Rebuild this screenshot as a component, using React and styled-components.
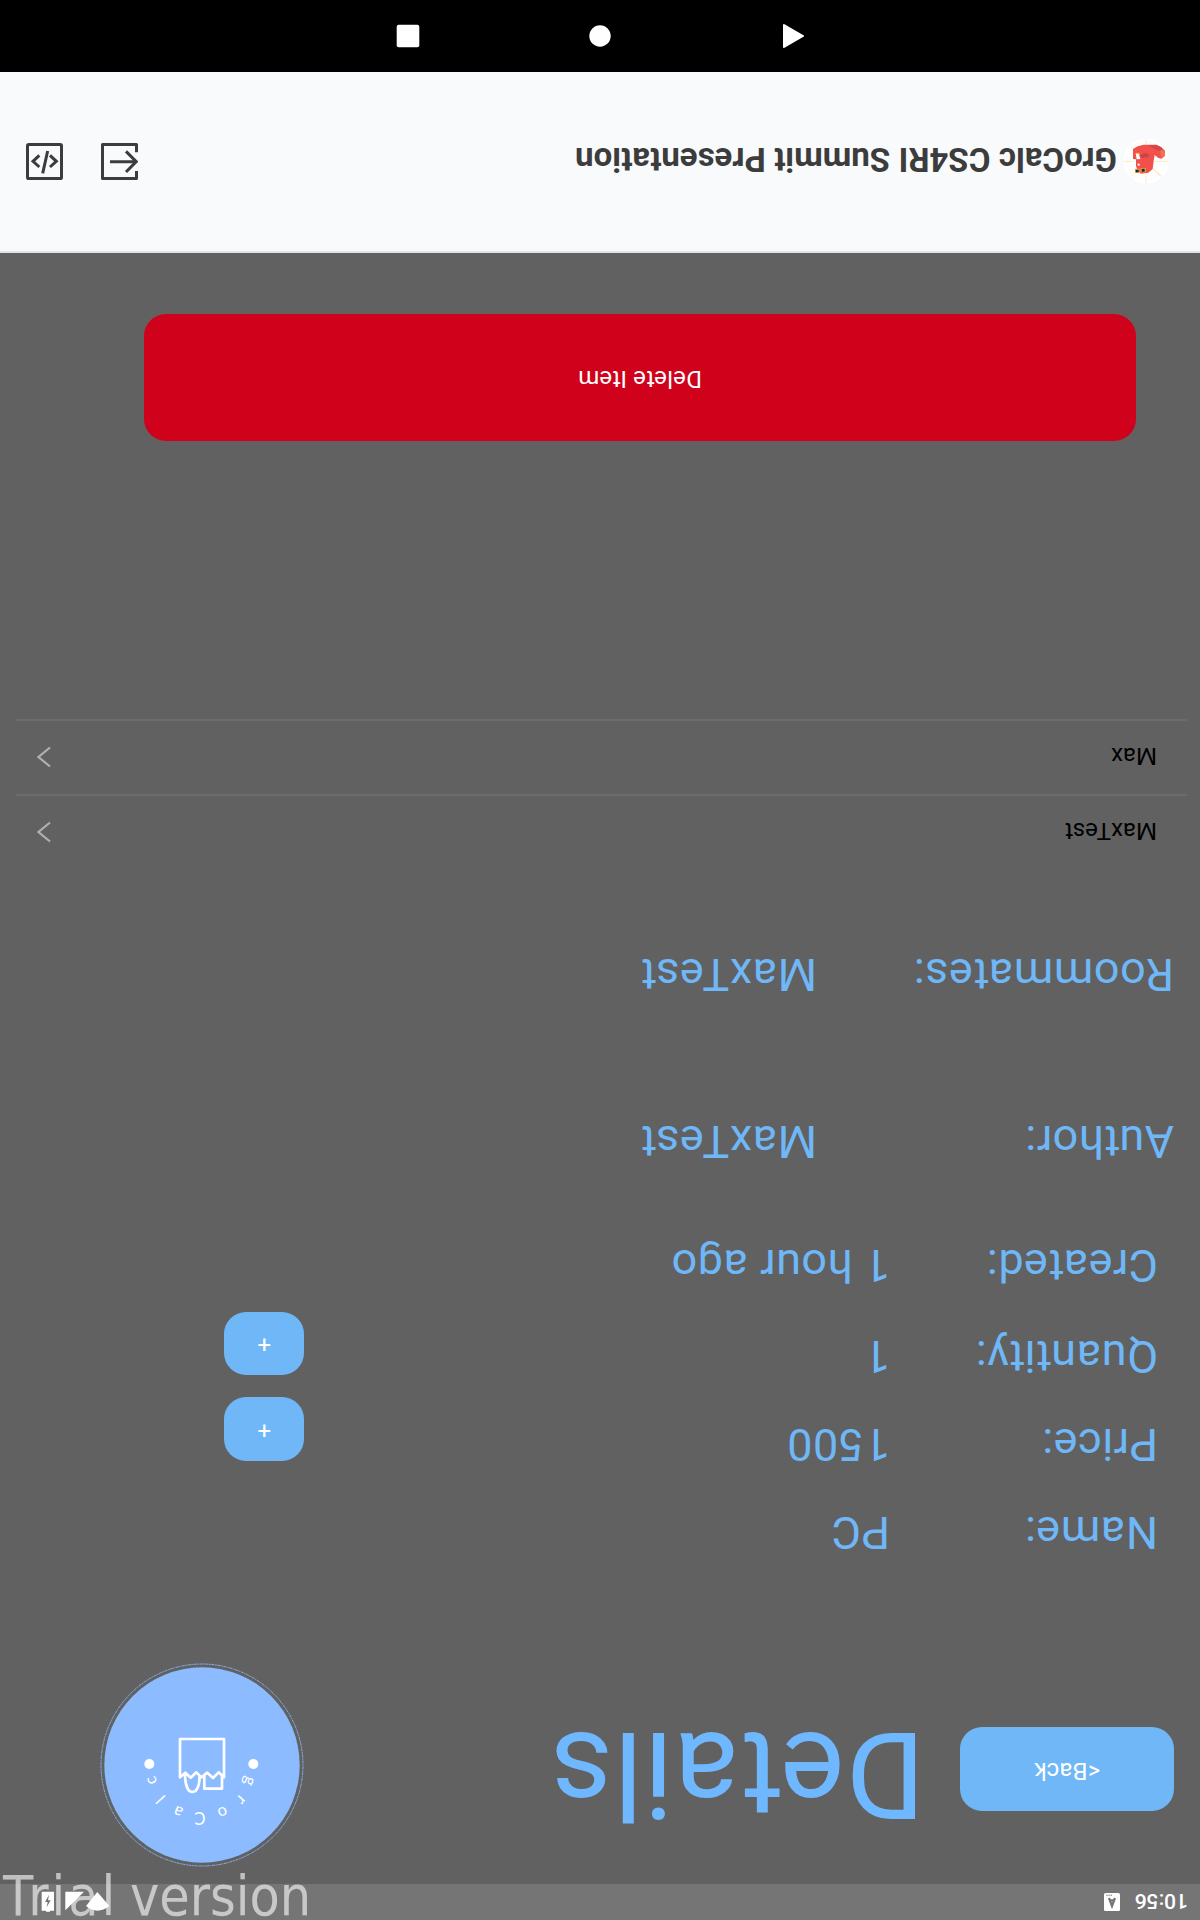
import React from "react";
import styled, { createGlobalStyle } from "styled-components";

const GlobalStyle = createGlobalStyle`
  * { box-sizing: border-box; }
  body { margin: 0; background: #616161; overflow: hidden; }
`;

const Device = styled.div`
  position: relative;
  width: 1200px;
  height: 1920px;
  overflow: hidden;
`;

const Screen = styled.div`
  display: flex;
  flex-direction: column;
  width: 1200px;
  height: 1920px;
  background: #616161;
  color: #6fb7f6;
  font-family: Roboto, sans-serif;
  transform: rotate(180deg);
`;

const StatusBar = styled.header`
  display: flex;
  align-items: center;
  height: 36px;
  padding: 0 40px 0 12px;
  background: #757575;
  color: #fff;
`;

const Clock = styled.span`
  width: 68px;
  font-size: 21px;
  font-weight: 500;
  line-height: 36px;
  padding-top: 2px;
`;

const StatusIcons = styled.svg`
  margin-left: auto;
`;

const Hero = styled.section`
  display: flex;
  align-items: flex-start;
  height: 322px;
  padding: 0 100px 0 26px;
`;

const Button = styled.button`
  display: flex;
  align-items: center;
  justify-content: center;
  flex: none;
  width: ${(p) => p.$width}px;
  height: ${(p) => p.$height}px;
  margin: ${(p) => p.$margin || "0"};
  padding: 0 0 4px;
  border: 0;
  border-radius: 22px;
  background: ${(p) => (p.$danger ? "#d0021b" : "#6fb7f6")};
  color: #fff;
  font: 400 24px/28px Roboto, sans-serif;
  letter-spacing: 0.2px;
`;

const Title = styled.h1`
  margin: 40px 0 0 35px;
  color: #6fb7ff;
  font-size: 121px;
  font-weight: 400;
  line-height: 140px;
  letter-spacing: 0.7px;
`;

const Logo = styled.svg`
  margin: 17px 0 0 auto;
`;

const DetailRow = styled.div`
  display: grid;
  grid-template-columns: ${(p) => p.$label}px 1fr 80px;
  align-items: start;
  height: ${(p) => p.$height}px;
  padding: 0 224px 0 ${(p) => p.$indent}px;
  font-size: 45px;
  line-height: 60px;
  letter-spacing: 0.55px;
  white-space: nowrap;
`;

const RoommateList = styled.ul`
  height: 428px;
  margin: 0;
  padding: 0 16px 0 13px;
  list-style: none;
`;

const Roommate = styled.li`
  display: flex;
  align-items: center;
  justify-content: space-between;
  height: 75px;
  padding: 0 21.5px 0 30px;
  border-bottom: 2px solid #6c6c6c;
  color: #000;
  font-size: 24px;
`;

const RoommateName = styled.span`
  padding-top: 2px;
`;

const DeleteArea = styled.section`
  flex: 1;
  padding-left: 64px;
`;

const AppBar = styled.footer`
  display: flex;
  align-items: center;
  height: 181px;
  padding: 0 26px 0 31px;
  border-top: 2px solid #dce6ee;
  background: #f8fafc;
  color: #3c3c3c;
`;

const AppName = styled.h2`
  flex: 1;
  margin: 0 0 0 6px;
  padding-top: 4px;
  font-size: 33px;
  font-weight: 700;
  line-height: 40px;
  letter-spacing: 0.06px;
  white-space: nowrap;
`;

const AppActions = styled.div`
  display: flex;
  gap: 38px;
`;

const NavBar = styled.nav`
  display: flex;
  align-items: center;
  justify-content: space-between;
  height: 72px;
  padding: 0 396px;
  background: #000;
`;

const Watermark = styled.div`
  position: absolute;
  left: 3px;
  bottom: 0;
  color: rgba(255, 255, 255, 0.6);
  font: 400 55px/48px "DejaVu Sans Condensed", "DejaVu Sans", sans-serif;
  font-stretch: condensed;
  word-spacing: -4px;
  white-space: nowrap;
`;

const WideWord = styled.span`
  letter-spacing: 3px;
`;

const logoLetters = [
  ["g", -141, -48, -71],
  ["r", -116, -103, -48],
  ["o", -61, -140, -23],
  ["C", 6, -158, 0],
  ["a", 71, -138, 24],
  ["l", 124, -103, 48],
  ["c", 150, -46, 73],
];

function GroCalcLogo() {
  return (
    <Logo width="204" height="204" viewBox="-306 -306 612 612">
      <circle r="303" fill="none" stroke="#8cbcff" strokeWidth="2.5" strokeDasharray="9 2 5 2" />
      <circle r="293" fill="#8cbcff" />
      <g fill="none" stroke="#fff" strokeWidth="8" strokeLinejoin="round" strokeLinecap="round">
        <path d="M66-37V78H-66V-37L-50-22L-33-39L-16-23L2-37L17-22L34-38L50-23Z" />
        <path d="M51-30C50-60 42-81 29-81S8-62 7-33" />
        <path d="M-7-33V-71H-60V-33" />
      </g>
      <circle cx="158" cy="3" r="15" fill="#fff" />
      <circle cx="-154" cy="3" r="15" fill="#fff" />
      <g fill="#fff" fontFamily="Lato, sans-serif" fontSize="50" textAnchor="middle">
        {logoLetters.map(([ch, x, y, angle]) => (
          <text key={ch + x} transform={`translate(${x} ${y}) rotate(${angle})`} y={ch === "C" || ch === "l" ? 17 : 13}>
            {ch}
          </text>
        ))}
      </g>
    </Logo>
  );
}

function Chevron() {
  return (
    <svg width="14" height="22" viewBox="0 0 14 22" fill="none" stroke="#b0b0b0" strokeWidth="2.2">
      <path d="M1 1.5L12.5 11L1 20.5" />
    </svg>
  );
}

function Avatar() {
  return (
    <svg width="46" height="46" viewBox="250 55 138 138">
      <g transform="rotate(180 319 124)">
        <circle cx="319" cy="124" r="68" fill="#fff" />
        <g stroke="#ffe9bd" strokeWidth="3">
          <path d="M319 57V74M319 162V192M251 125H279M345 125H387M274 80L284 90M274 170L288 157" />
          <path d="M341 148L365 171" stroke="#ffd98f" />
        </g>
        <circle cx="319" cy="124" r="57" fill="none" stroke="#fff0d2" strokeWidth="3" strokeDasharray="3 7" />
        <path d="M280 88L294 80L312 75H350L365 83L376 93V108L366 117L356 115L345 106L342 124L339 148L326 159L304 162L294 153L289 139V119L280 118Z" fill="#f2504a" />
        <path d="M325 76H350L365 83L370 91L356 94L341 86Z" fill="#d74649" />
        <path d="M303 105L316 101L327 103V112L305 115Z" fill="#cf4148" />
        <path d="M362 91L376 94V108L364 115Z" fill="#f4705a" />
        <path d="M288 101H297L302 118L291 119Z" fill="#fff" />
        <path d="M290 101H299V105" fill="none" stroke="#f6b52f" strokeWidth="3" />
        <path d="M294 132H300V138H294Z" fill="#fff" />
        <path d="M285 147H299V160H287ZM303 145H318V158H303Z" fill="#f6b52f" />
        <path d="M288 150H297V158H288ZM306 147H315V156H306Z" fill="#14284b" />
      </g>
    </svg>
  );
}

const details = [
  { label: "Name:", value: "PC", height: 88 },
  { label: "Price:", value: "1500", height: 88, step: [64, "13px 0 0"] },
  { label: "Quantity:", value: "1", height: 91, step: [63, "11px 0 0"] },
  { label: "Created:", value: "1 hour ago", height: 124 },
];

export default function App() {
  return (
    <Device>
      <GlobalStyle />
      <Screen>
        <StatusBar>
          <Clock>10:56</Clock>
          <svg width="16" height="18" viewBox="0 0 16 18">
            <rect width="16" height="18" rx="1.5" fill="#fff" />
            <path d="M5 13L8 5L11 13M6 10.6H10" fill="none" stroke="#757575" strokeWidth="2.2" />
            <path d="M8 15.8H14" stroke="#757575" strokeWidth="1" strokeDasharray="1.4 .8" />
          </svg>
          <StatusIcons width="70" height="21" viewBox="0 0 210 63">
            <path d="M38 60L2 18Q38-10 72 18Z" fill="#fff" />
            <path d="M134 61H78L134 5Z" fill="#fff" />
            <path d="M168 4H180V1H192V4H205V61H168Z" fill="#fff" />
            <path d="M190 14L178 35H186L183 52L195 30H187Z" fill="#757575" />
          </StatusIcons>
        </StatusBar>

        <Hero>
          <Button $width={214} $height={84} $margin="73px 0 0">&lt;Back</Button>
          <Title>Details</Title>
          <GroCalcLogo />
        </Hero>

        {details.map((d) => (
          <DetailRow key={d.label} $label={268} $indent={42} $height={d.height}>
            <span>{d.label}</span>
            <span>{d.value}</span>
            {d.step && <Button $width={80} $height={d.step[0]} $margin={d.step[1]}>+</Button>}
          </DetailRow>
        ))}
        <DetailRow $label={357} $indent={26} $height={167}>
          <span>Author:</span>
          <span>MaxTest</span>
        </DetailRow>
        <DetailRow $label={357} $indent={26} $height={135}>
          <span>Roommates:</span>
          <span>MaxTest</span>
        </DetailRow>

        <RoommateList>
          {["MaxTest", "Max"].map((name) => (
            <Roommate key={name}>
              <RoommateName>{name}</RoommateName>
              <Chevron />
            </Roommate>
          ))}
        </RoommateList>

        <DeleteArea>
          <Button $danger $width={992} $height={127}>Delete Item</Button>
        </DeleteArea>

        <AppBar>
          <Avatar />
          <AppName>GroCalc CS4RI Summit Presentation</AppName>
          <AppActions>
            <svg width="37" height="37" viewBox="0 0 111 111" fill="none" stroke="#3c3c3c" strokeWidth="9" strokeLinejoin="round">
              <path d="M4.5 27V4.5H106.5V106.5H4.5V83" />
              <path d="M84 55H5M36 86L5 55L36 24" strokeLinejoin="miter" />
            </svg>
            <svg width="37" height="37" viewBox="0 0 111 111" fill="none" stroke="#3c3c3c" strokeWidth="9">
              <rect x="4.5" y="4.5" width="102" height="102" rx="4" />
              <path d="M71 74L90 56L71 39M39 74L20 56L39 39M46 87L61 20" />
            </svg>
          </AppActions>
        </AppBar>

        <NavBar>
          <svg width="24" height="24" viewBox="0 0 24 24">
            <path d="M1 12L20 1V23Z" fill="#fff" stroke="#fff" strokeWidth="2" strokeLinejoin="round" />
          </svg>
          <svg width="22" height="22" viewBox="0 0 22 22">
            <circle cx="11" cy="11" r="10.7" fill="#fff" />
          </svg>
          <svg width="24" height="24" viewBox="0 0 24 24">
            <rect x=".7" y=".7" width="22.6" height="22.6" rx="2" fill="#fff" />
          </svg>
        </NavBar>
      </Screen>
      <Watermark>
        <WideWord>Trial</WideWord> version
      </Watermark>
    </Device>
  );
}
